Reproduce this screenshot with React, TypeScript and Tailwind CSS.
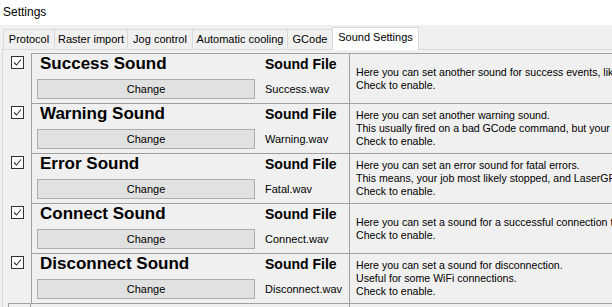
const tabs = [
  { label: "Protocol", w: "w-[52px]" },
  { label: "Raster import", w: "w-[74px]" },
  { label: "Jog control", w: "w-[66px]" },
  { label: "Automatic cooling", w: "w-[96px]" },
  { label: "GCode", w: "w-[46px]" },
];

const rows = [
  {
    title: "Success Sound",
    file: "Success.wav",
    lines: ["Here you can set another sound for success events, like a finished job.", "Check to enable."],
  },
  {
    title: "Warning Sound",
    file: "Warning.wav",
    lines: [
      "Here you can set another warning sound.",
      "This usually fired on a bad GCode command, but your machine keeps running.",
      "Check to enable.",
    ],
  },
  {
    title: "Error Sound",
    file: "Fatal.wav",
    lines: [
      "Here you can set an error sound for fatal errors.",
      "This means, your job most likely stopped, and LaserGRBL needs attention.",
      "Check to enable.",
    ],
  },
  {
    title: "Connect Sound",
    file: "Connect.wav",
    lines: ["Here you can set a sound for a successful connection to your machine.", "Check to enable."],
  },
  {
    title: "Disconnect Sound",
    file: "Disconnect.wav",
    lines: ["Here you can set a sound for disconnection.", "Useful for some WiFi connections.", "Check to enable."],
  },
];

function CheckBox() {
  return (
    <div className="w-[13px] h-[13px] border border-[#333333] bg-white flex items-center justify-center">
      <svg width="11" height="11" viewBox="0 0 11 11">
        <polyline points="2,5.5 4.5,8 9,2.5" fill="none" stroke="#333333" strokeWidth="1.1" />
      </svg>
    </div>
  );
}

function SoundRow({ title, file, lines }: { title: string; file: string; lines: string[] }) {
  return (
    <div className="flex h-[50px]">
      <div className="w-[28px] shrink-0 pl-[8px] pt-[3px]">
        <CheckBox />
      </div>
      <div className="w-[318px] shrink-0 flex border-l border-t border-[#a0a0a0]">
        <div className="w-[233px] shrink-0 flex flex-col">
          <div className="pl-[8px] text-[17px] leading-[20px] font-bold">{title}</div>
          <button className="ml-[5px] mt-[5px] w-[218px] h-[20px] bg-[#e1e1e1] border border-[#adadad] text-[11px] leading-[13px] text-black">
            Change
          </button>
        </div>
        <div className="pt-[2px] flex flex-col">
          <div className="text-[14px] leading-[16px] font-bold">Sound File</div>
          <div className="mt-[11px] text-[11px] leading-[13px]">{file}</div>
        </div>
      </div>
      <div className="flex-1 min-w-0 flex flex-col justify-center pl-[6px] border-l border-t border-[#a0a0a0] text-[10.6px] leading-[13px] whitespace-nowrap overflow-hidden">
        {lines.map((l) => (
          <div key={l}>{l}</div>
        ))}
      </div>
    </div>
  );
}

export default function App() {
  return (
    <div className="w-[612px] h-[307px] overflow-hidden bg-white text-black font-['Liberation_Sans',Arial,sans-serif]">
      <div className="h-[25px] pl-[3px] pt-[5px] text-[12px] leading-[15px]">Settings</div>
      <div className="h-[282px] bg-[#f0f0f0] pl-[2px] pt-[2px]">
        <div className="flex items-end h-[22px] pl-[1px] relative z-10">
          {tabs.map((t) => (
            <div
              key={t.label}
              className={`${t.w} h-[20px] -mr-px border border-b-0 border-[#d9d9d9] bg-[#f0f0f0] text-[11px] leading-[18px] text-center whitespace-nowrap`}
            >
              {t.label}
            </div>
          ))}
          <div className="w-[87px] h-[23px] -mb-px border border-b-0 border-[#d9d9d9] bg-white text-[11px] leading-[18px] text-center whitespace-nowrap">
            Sound Settings
          </div>
        </div>
        <div className="h-[260px] border-t border-l border-[#d9d9d9] pt-[3px]">
          {rows.map((r) => (
            <SoundRow key={r.title} {...r} />
          ))}
          <div className="flex h-[10px]">
            <div className="w-[28px] shrink-0 pl-[5px]">
              <div className="h-full border-t border-l border-r border-[#a0a0a0]" />
            </div>
            <div className="w-[318px] shrink-0 border-t border-[#a0a0a0]" />
            <div className="flex-1 border-l border-t border-[#a0a0a0]" />
          </div>
        </div>
      </div>
    </div>
  );
}
